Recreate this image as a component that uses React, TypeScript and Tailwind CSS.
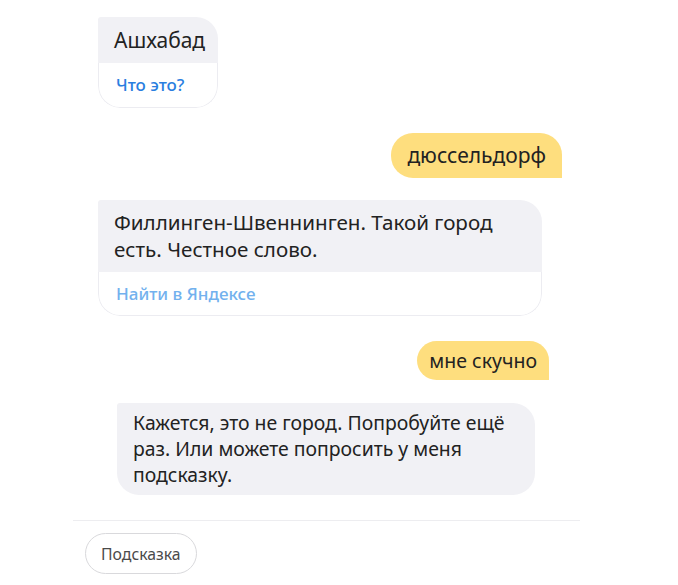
const font = { fontFamily: '"Noto Sans", "Open Sans", Arial, sans-serif' };

const App = () => {
  return (
    <div className="min-h-screen w-[678px] bg-white text-[#222]" style={font}>
      <div className="flex flex-col pt-[17px]">
        {/* Alice: city + link */}
        <div className="ml-[98px] w-[120px] overflow-hidden rounded-[22px] rounded-tl-[3px]">
          <div className="bg-[#f1f1f5] px-[16px] py-[10px] text-[21px] leading-[26px]">
            Ашхабад
          </div>
          <div className="rounded-b-[22px] border border-t-0 border-[#ececf1] px-[17px] py-[12px] text-[17px] font-medium leading-[20px] text-[#2a7ee0]">
            Что это?
          </div>
        </div>

        {/* User */}
        <div className="mr-[116px] mt-[25px] self-end rounded-[22px] rounded-br-none bg-[#fede7e] px-[16px] py-[9px] text-[21px] leading-[27px]">
          дюссельдорф
        </div>

        {/* Alice: reply + search */}
        <div className="ml-[98px] mt-[22px] w-[444px] overflow-hidden rounded-[22px] rounded-tl-[3px]">
          <div className="bg-[#f1f1f5] px-[16px] py-[9px] text-[20.6px] leading-[27px]">
            Филлинген-Швеннинген. Такой город
            <br />
            есть. Честное слово.
          </div>
          <div className="rounded-b-[22px] border border-t-0 border-[#ececf1] px-[17px] py-[12px] text-[17px] font-medium leading-[19px] text-[#72b1ee]">
            Найти в Яндексе
          </div>
        </div>

        {/* User */}
        <div className="mr-[129px] mt-[25px] self-end rounded-[20px] rounded-br-none bg-[#fede7e] px-[12px] py-[6px] text-[19.5px] leading-[27px]">
          мне скучно
        </div>

        {/* Alice */}
        <div className="ml-[117px] mt-[23px] w-[418px] rounded-[22px] rounded-tl-[3px] bg-[#f1f1f5] px-[16px] py-[7px] text-[19.4px] leading-[26px]">
          Кажется, это не город. Попробуйте ещё
          <br />
          раз. Или можете попросить у меня
          <br />
          подсказку.
        </div>

        {/* Divider */}
        <div className="ml-[73px] mt-[25px] h-px w-[507px] bg-[#ededf0]" />

        {/* Suggest */}
        <div className="ml-[85px] mt-[12px]">
          <button
            type="button"
            className="h-[41px] rounded-full border border-[#d9d9dc] px-[15px] text-[15.8px] leading-[20px] text-[#4a4a4a]"
          >
            Подсказка
          </button>
        </div>
      </div>
    </div>
  );
};

export default App;
